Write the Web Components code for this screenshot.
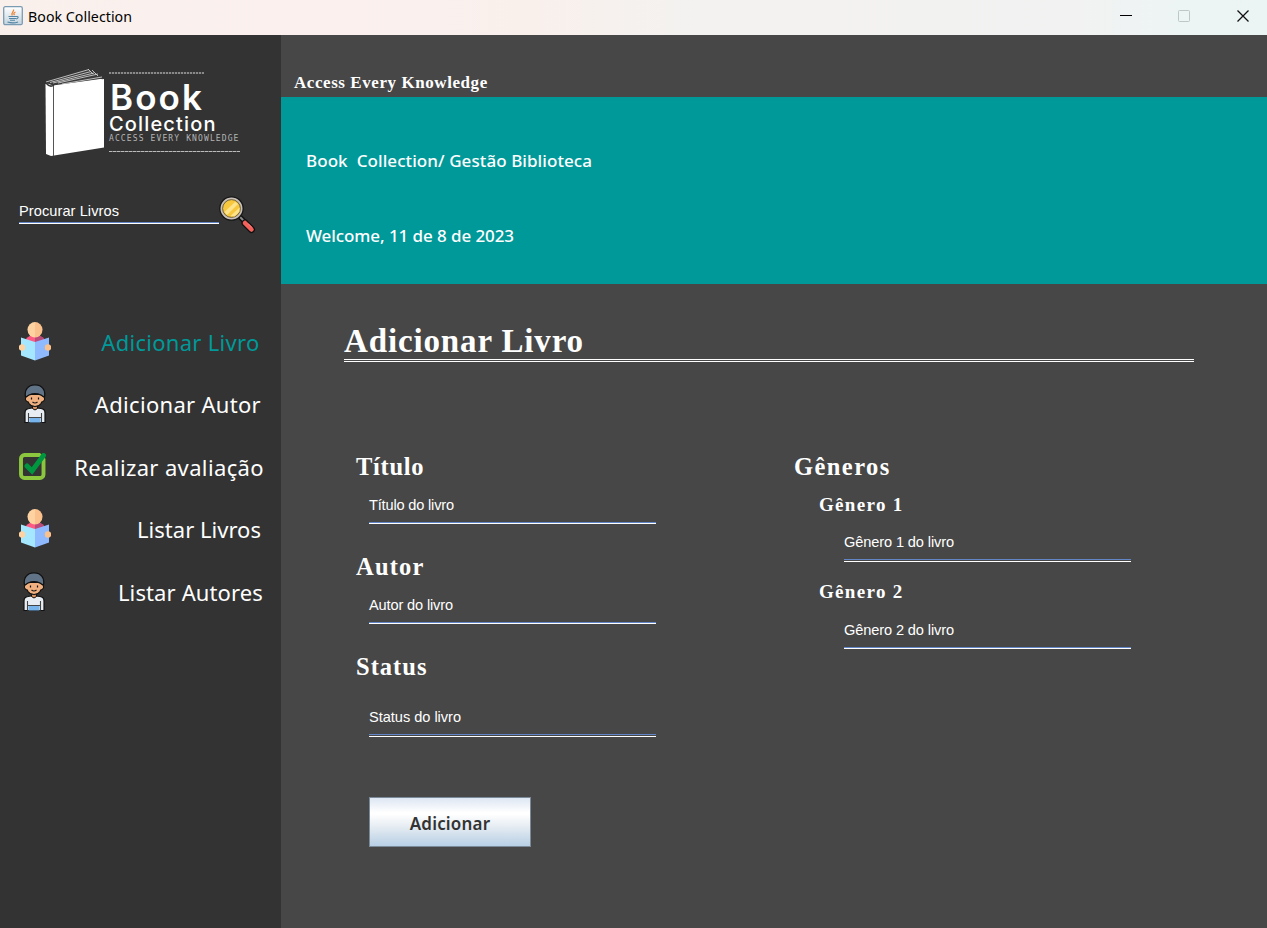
<!DOCTYPE html>
<html lang="pt">
<head>
<meta charset="utf-8">
<title>Book Collection</title>
<style>
html,body{margin:0;height:100%;overflow:hidden;background:#474747}
</style>
</head>
<body>
<book-window></book-window>
<script>
const define=(name,html,setup)=>customElements.define(name,class extends HTMLElement{
  connectedCallback(){
    if(this.shadowRoot)return;
    const t=document.createElement('template');
    t.innerHTML=html;
    this.attachShadow({mode:'open'}).append(t.content.cloneNode(true));
    if(setup)setup.call(this,this.shadowRoot);
  }
});

// A single line of text whose bottom edge is its baseline. "rise" is the height
// above the baseline, "measure" the advance width that tracking is tuned to.
define('text-line',`<style>
:host{display:block;line-height:0;white-space:pre;flex:none}
.strut{display:inline-block;width:0}
:host([face=serif]){font-family:"Liberation Serif",serif;font-weight:700}
:host([face=sans]){font-family:"Noto Sans","Open Sans",sans-serif}
:host([face=arial]){font-family:"Liberation Sans",sans-serif}
</style><i class="strut"></i><span><slot></slot></span>`,function(root){
  const rise=this.getAttribute('rise')+'px';
  this.style.height=rise;
  root.querySelector('.strut').style.height=rise;
  this.style.fontSize=this.getAttribute('size')+'px';
  if(this.hasAttribute('indent'))this.style.paddingLeft=this.getAttribute('indent')+'px';
  if(this.hasAttribute('weight'))this.style.fontWeight=this.getAttribute('weight');
  const s=root.querySelector('span'),m=+this.getAttribute('measure'),n=this.textContent.length;
  const w=s.getBoundingClientRect().width;
  if(m&&w)s.style.letterSpacing=((m-w)/(n-.5)).toFixed(3)+'px';
});

define('icon-java',`<style>:host{display:block;width:20px;height:20px;flex:none}svg{display:block}</style>
<svg width="20" height="20"><defs><linearGradient id="g" x2="0" y2="1"><stop stop-color="#fff"/><stop offset="1" stop-color="#c3d3de"/></linearGradient></defs>
<rect x=".7" y=".7" width="18.6" height="18" rx="1.5" fill="url(#g)" stroke="#7b9bb3" stroke-width="1.3"/>
<path d="M10.5 3.5c1 2-3 3-1.2 6M12.5 6c-2 1-2 1.800-1 3.200" fill="none" stroke="#ee8434" stroke-width="1.300"/>
<path d="M5.500 10.500h8M6 12.500h7M13.500 10.500c2.500-.5 2 2-.5 2.500M7 14.300h5M4.500 16c3 .9 8 .9 10.500-.1" fill="none" stroke="#5585a4" stroke-width="1.100"/></svg>`);

define('title-bar',`<style>
:host{display:flex;height:35px;flex:none;background:linear-gradient(90deg,#f9f0ec 0,#fbf0ee 25%,#f9f0ec 42%,#f3f2f0 55%,#f2f2f2 85%,#edf4f4 93%,#ebf5f4 100%);color:#000}
icon-java{margin:6px 5px 0 3px}
.controls{margin-left:auto;display:flex;width:176px;padding-top:9px}
svg{display:block;width:58px;height:14px}
</style><icon-java></icon-java><text-line face="sans" size="14.2" rise="22" measure="104">Book Collection</text-line>
<div class="controls">
<svg><path d="M29 6.500h12" stroke="#000"/></svg>
<svg><rect x="29.500" y="1.500" width="11" height="11" rx="1" fill="none" stroke="#c0c5c5"/></svg>
<svg><path d="M30.500 1.500l11 11m0-11l-11 11" stroke="#111" stroke-width="1.300"/></svg>
</div>`);

define('brand-logo',`<style>
:host{display:flex;height:92px;padding:33px 0 0 45px;color:#fff}
svg{display:block;flex:none}
.words{margin-left:4px;width:132px}
.rule{height:2px;background:repeating-linear-gradient(90deg,#888 0 2px,#444 2px 3px)}
.rule.thin{height:1px;background:repeating-linear-gradient(90deg,#bbb 0 3px,#777 3px 4px)}
</style>
<svg width="60" height="90"><path d="M.5 16 47 4l12 9v66.500L6 88 1 86Z" fill="#fff"/>
<path d="M1 15 44 1.500l15 9-51 7Z" fill="#3b3b3b"/>
<path d="M1 14 44 1.500M5 14.500 46 3.500M8 15 49 5M13 15 53 6M17 16 57 9M43 1l5 5M47 2l6 6" stroke="#ccc" stroke-width=".9" fill="none"/>
<path d="M8.500 18 59 11v4L9 20Z" fill="#fff"/><path d="M1 15q4 5 8 2" fill="none" stroke="#333" stroke-width="1.500"/>
<path d="M8.500 18V88" stroke="#555" stroke-width="1"/></svg>
<div class="words"><div class="rule" style="width:95px;margin-top:4px"></div>
<text-line style="font-family:Inter,sans-serif" size="35" rise="35.500" measure="93" indent="1" weight="600">Book</text-line>
<text-line style="font-family:Inter,sans-serif" size="20" rise="20.500" measure="107" weight="500">Collection</text-line>
<text-line style="font-family:'DejaVu Sans Mono',monospace;color:#b5b5b5" size="8" rise="11" measure="130">ACCESS EVERY KNOWLEDGE</text-line>
<div class="rule thin" style="width:131px;margin-top:10px"></div></div>`);

define('line-field',`<style>
:host{display:block;color:#fff;width:287px}
.caret{height:1px;background:#6285c8}
.rule{height:1px;background:#fff}
</style><slot></slot><div class="caret"></div><div class="rule"></div>`,function(r){
  r.querySelector('.caret').style.marginTop=(this.getAttribute('drop')||12)+'px';
  if(this.hasAttribute('split'))r.querySelector('.rule').style.marginTop='1px';
});

define('icon-search',`<style>:host{display:block}svg{display:block}</style>
<svg width="38" height="38"><path d="M21 21 27 27" stroke="#111" stroke-width="5"/><path d="M21 21 27 27" stroke="#888" stroke-width="2"/>
<path d="m26 27 6.500 6.500" stroke="#111" stroke-width="7" stroke-linecap="round"/><path d="m26 27 6.500 6.500" stroke="#f4605a" stroke-width="4.500" stroke-linecap="round"/><path d="m29 27.500 4 4" stroke="#ff8c85" stroke-width="1"/>
<circle cx="12.500" cy="12.500" r="12.300" fill="#171717"/><circle cx="12.500" cy="12.500" r="10" fill="#f7c83e" stroke="#c9c0b9" stroke-width="2"/><circle cx="12.500" cy="12.500" r="8.900" fill="none" stroke="#51472c" stroke-width=".8"/>
<path d="M5.500 16 16 6l3 2L8 19ZM11.500 20 20.500 11.500v4l-5 5Z" fill="#fde38b"/></svg>`);

define('icon-reader',`<style>:host{display:block}svg{display:block}</style>
<svg width="32" height="39"><path d="M7 17q3-4 9-4t9 4l-2 5H9Z" fill="#ff5a83"/><path d="M16 13q6 0 9 4l-2 5h-7Z" fill="#b94a7c"/>
<path d="M8.500 7.500a7.500 8 0 0 1 7.500-7.500v15.500a7.500 8 0 0 1-7.500-8Z" fill="#ffd2a1"/><path d="M16 0a7.500 8 0 0 1 7.500 7.500a7.500 8 0 0 1-7.500 8Z" fill="#fbc18c"/>
<path d="M2 15.500 16 20v18.500L2 33.500Z" fill="#a4e7ff"/><path d="M30 15.500 16 20v18.500l14-5Z" fill="#8fbaff"/>
<circle cx="3" cy="25.500" r="3.200" fill="#ffd2a1"/><circle cx="29" cy="25.500" r="3.200" fill="#fbc18c"/></svg>`);

define('icon-author',`<style>:host{display:block}svg{display:block}</style>
<svg width="22" height="39"><path d="M1 38.500V29q0-4 4-4.500L8 24h5l4 .5q4 .5 4 4.500v9.500Z" fill="#e8edf4" stroke="#111" stroke-width="1.200"/>
<path d="M8.500 20h5v4.500q-2.500 3-5 0Z" fill="#d99060" stroke="#111"/>
<path d="M5.500 34h11v4.500h-11Z" fill="#78b4ec"/><path d="M4.500 29v9.500M17.500 29v9.500M5 33.500h12" stroke="#444" stroke-width="1.100"/>
<path d="M2.500 12.500q-2.500 3 .5 5 1.500 0 2 2 2 3 6 3t6-3q.5-2 2-2 3-2 .5-5l-3-2H5Z" fill="#f0b080" stroke="#111" stroke-width="1.100"/>
<path d="M1.500 13Q.5 7 3 4.500 5.500.8 11 .8T19 4.500Q21.500 7 20.500 13q-1.500-.5-3.500-2-6-2.500-12 0-2 1.500-3.500 2Z" fill="#617387" stroke="#111" stroke-width="1.300"/>
<path d="M7.500 13.500v2M14.500 13.500v2M8.500 18q2.500 2 5 0" stroke="#111" stroke-width="1.200" fill="none"/></svg>`);

define('icon-check',`<style>:host{display:block}svg{display:block}</style>
<svg width="28" height="28"><rect x="2" y="2" width="22.500" height="23" rx="3.500" fill="none" stroke="#8cc63f" stroke-width="3.900"/>
<path d="M21 0h6v6Z" fill="#333"/><path d="M8 13l5 5L24.500 2.500" fill="none" stroke="#00963f" stroke-width="5" stroke-linejoin="miter" stroke-linecap="round"/></svg>`);

define('menu-item',`<style>
:host{display:flex;height:62.500px;color:#fff;align-items:flex-start}
.icon{width:35px;flex:none;padding-left:19px}
</style><div class="icon"><slot name="icon"></slot></div><slot></slot>`);

define('side-bar',`<style>
:host{display:block;width:281px;flex:none;background:#333}
.search{display:flex;margin:35px 0 0 19px;height:127px}
.search line-field{width:200px;padding-top:9px}
icon-search{margin:1px 0 0 0}
menu-item text-line{margin-left:auto}
menu-item [slot=icon]{margin-top:-1px}
.on{color:#099}
</style>
<brand-logo></brand-logo>
<div class="search"><line-field drop="6"><text-line face="arial" size="14.600" rise="12" measure="100">Procurar Livros</text-line></line-field><icon-search></icon-search></div>
<nav>
<menu-item class="on"><icon-reader slot="icon" style="padding-top:1px"></icon-reader><text-line face="sans" size="22" rise="29" measure="158" style="margin-right:21.500px">Adicionar Livro</text-line></menu-item>
<menu-item><icon-author slot="icon" style="padding-left:5px"></icon-author><text-line face="sans" size="22" rise="28" measure="166" style="margin-right:20px">Adicionar Autor</text-line></menu-item>
<menu-item><icon-check slot="icon" style="padding-top:6.500px"></icon-check><text-line face="sans" size="22" rise="29" measure="189.500" style="margin-right:17px">Realizar avaliação</text-line></menu-item>
<menu-item><icon-reader slot="icon"></icon-reader><text-line face="sans" size="22" rise="28" measure="124" style="margin-right:20px">Listar Livros</text-line></menu-item>
<menu-item><icon-author slot="icon" style="padding:1px 0 0 4px"></icon-author><text-line face="sans" size="22" rise="29" measure="145" style="margin-right:18px">Listar Autores</text-line></menu-item>
</nav>`);

define('page-header',`<style>
:host{display:block;color:#fff}
.top{height:62px}
.band{height:187px;background:#099;overflow:hidden}
</style><div class="top"><text-line face="serif" size="17" rise="53" indent="13" measure="193.500">Access Every Knowledge</text-line></div>
<div class="band"><text-line face="sans" size="17" weight="500" rise="70" indent="25" measure="286">Book  Collection/ Gestão Biblioteca</text-line>
<text-line face="sans" size="17" weight="500" rise="75" indent="25" measure="208">Welcome, 11 de 8 de 2023</text-line></div>`);

define('metal-button',`<style>
:host{display:block}
button{all:unset;box-sizing:border-box;display:flex;justify-content:center;width:162px;height:50px;border:1px solid #7a8a99;background:linear-gradient(#dde6f3 0,#fff 30%,#fff 34%,#e5ecf2 60%,#b8cfe5 100%);color:#333}
</style><button><slot></slot></button>`);

define('book-form',`<style>
:host{display:block;color:#fff;padding:0 73px 0 63px}
.rule{height:1px;margin-top:7px;border:solid #fff;border-width:1px 0}
.cols{display:grid;grid-template-columns:438px 1fr;padding-left:12px}
.cols line-field{margin-left:13px}
.cols .deep{margin-left:50px}
metal-button{margin:60px 0 0 13px}
</style>
<text-line face="serif" size="33" rise="68" measure="239.500">Adicionar Livro</text-line><div class="rule"></div>
<div class="cols"><div>
<text-line face="serif" size="24.500" rise="113" measure="68">Título</text-line>
<line-field><text-line face="arial" size="14.600" rise="35" measure="85">Título do livro</text-line></line-field>
<text-line face="serif" size="24.500" rise="51" measure="68">Autor</text-line>
<line-field><text-line face="arial" size="14.600" rise="35" measure="84">Autor do livro</text-line></line-field>
<text-line face="serif" size="24.500" rise="51" measure="71">Status</text-line>
<line-field split><text-line face="arial" size="14.600" rise="47" measure="92">Status do livro</text-line></line-field>
<metal-button><text-line face="sans" size="17" rise="32" weight="600" measure="80.500">Adicionar</text-line></metal-button>
</div><div>
<text-line face="serif" size="24.500" rise="113" measure="96">Gêneros</text-line>
<text-line face="serif" size="19" rise="36" indent="25" measure="84">Gênero 1</text-line>
<line-field class="deep" split><text-line face="arial" size="14.600" rise="36" measure="110">Gênero 1 do livro</text-line></line-field>
<text-line face="serif" size="19" rise="36" indent="25" measure="84">Gênero 2</text-line>
<line-field class="deep"><text-line face="arial" size="14.600" rise="37" measure="110">Gênero 2 do livro</text-line></line-field>
</div></div>`);

define('book-window',`<style>
:host{display:flex;flex-direction:column;height:100vh;background:#474747}
.body{display:flex;flex:1;min-height:0}
main{flex:1;min-width:0}
</style><title-bar></title-bar><div class="body"><side-bar></side-bar><main><page-header></page-header><book-form></book-form></main></div>`);
</script>
</body>
</html>
